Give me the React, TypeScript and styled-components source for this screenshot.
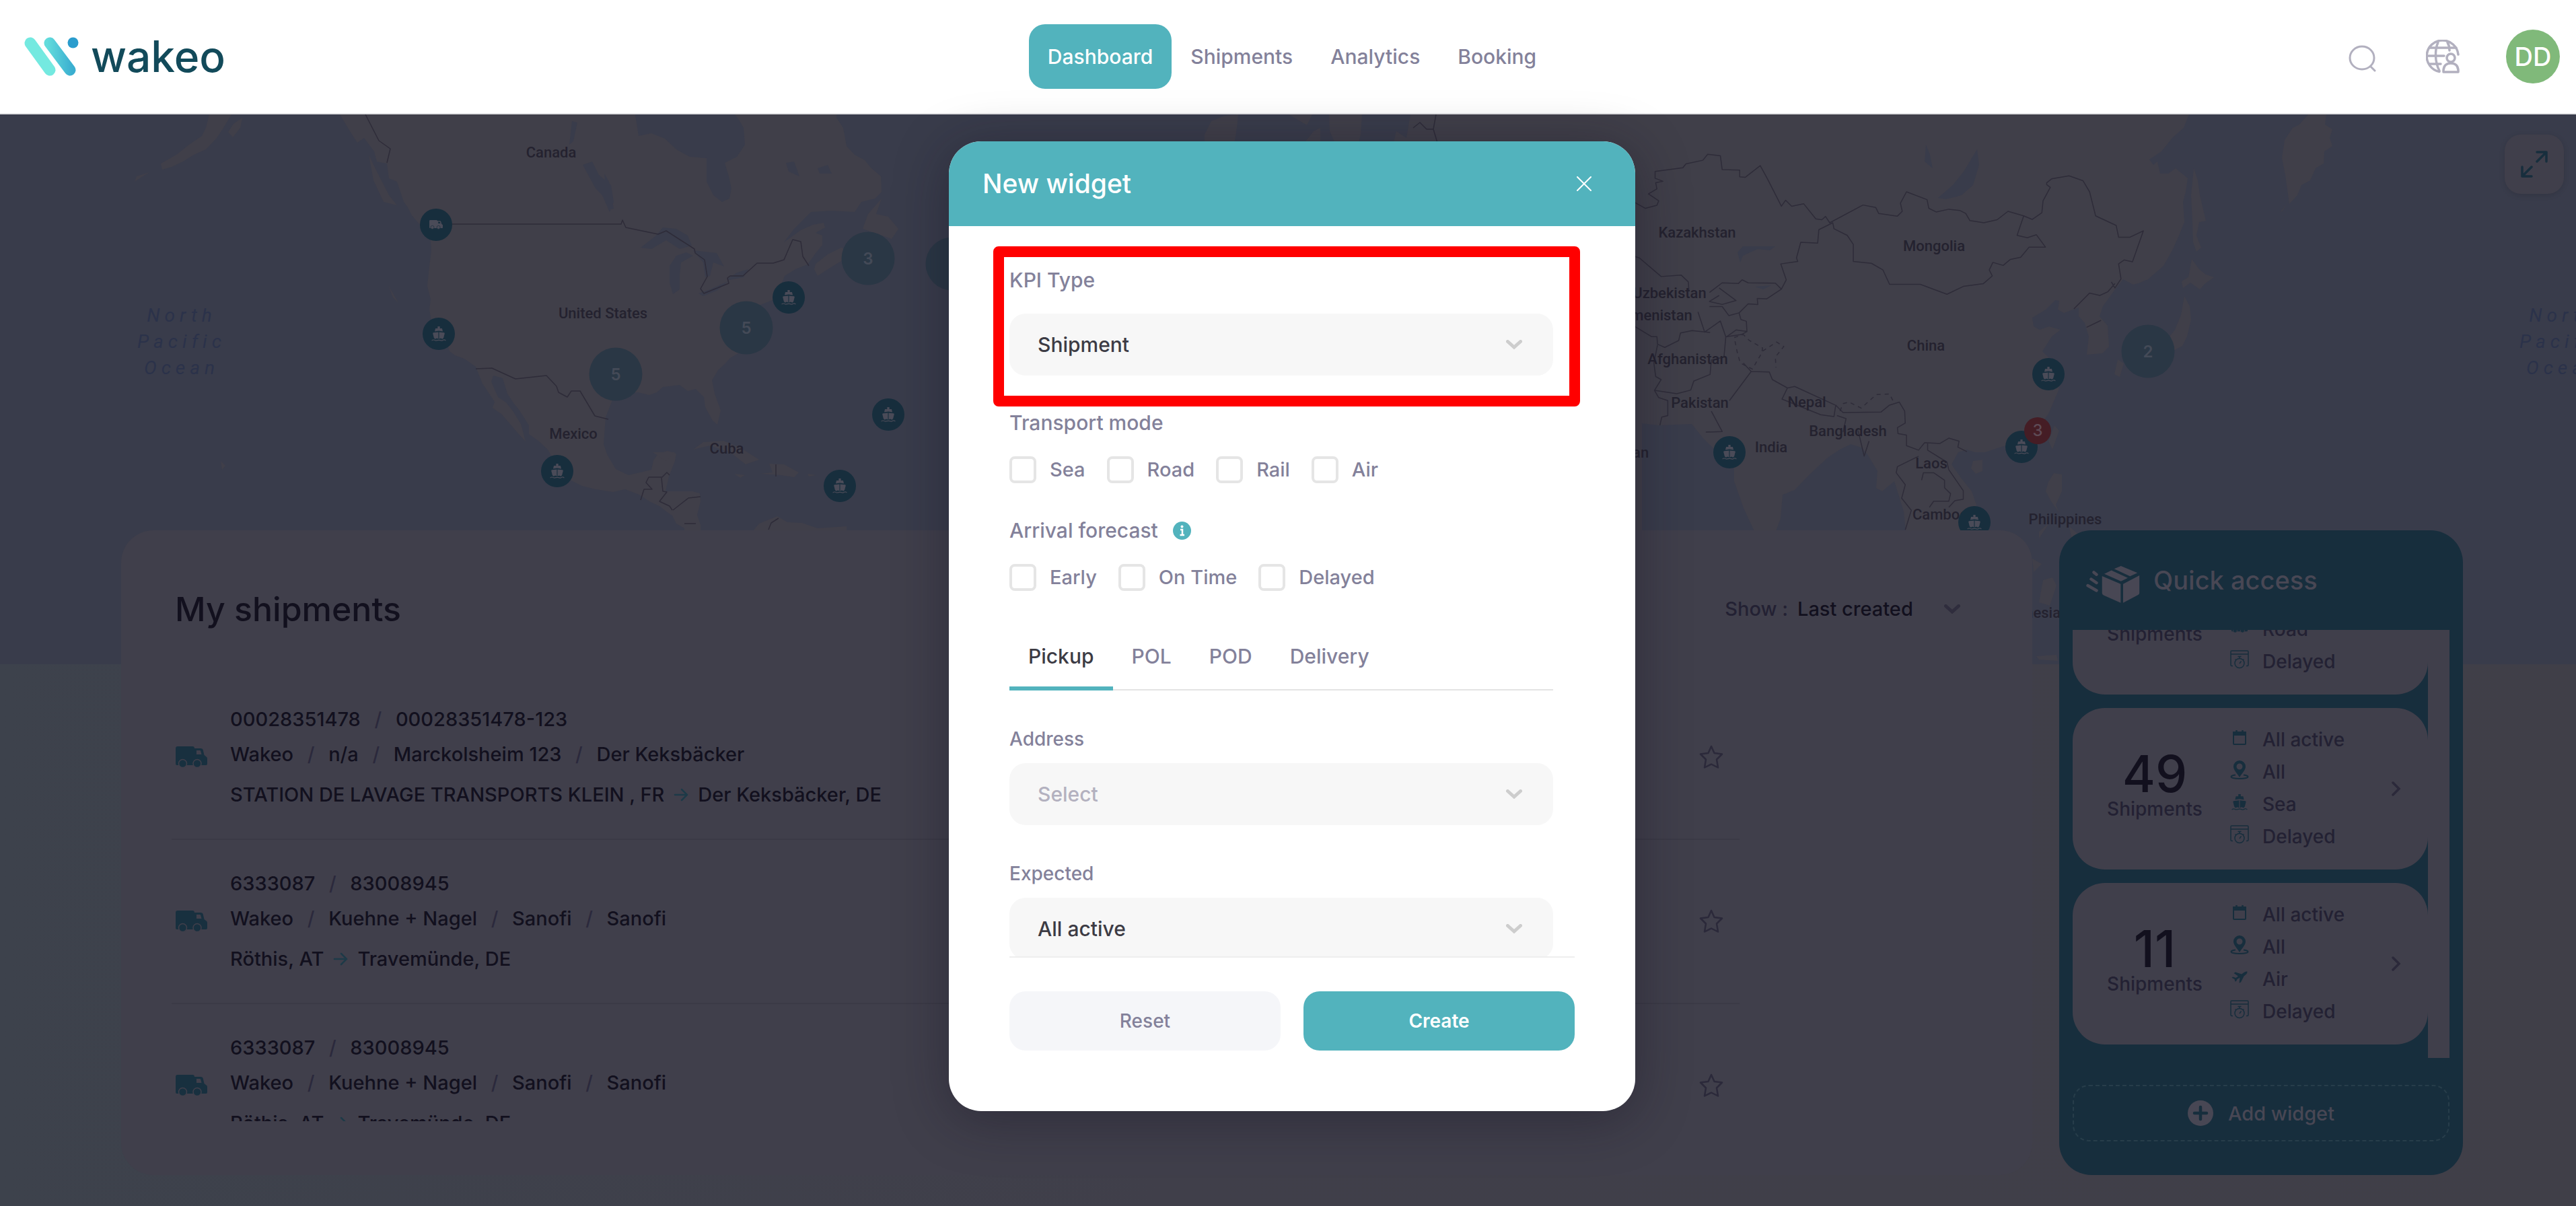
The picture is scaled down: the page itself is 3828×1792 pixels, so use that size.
import React, { useState } from "react";
import styled, { createGlobalStyle, css } from "styled-components";

const teal = "#52b3bd";
const muted = "#83819a";
const ink = "#12101e";
const inkSoft = "#232133";
const deep = "#172e3d";
const surface = "#403f4b";
const ocean = "#393c4b";
const land = "#403f49";

const Global = createGlobalStyle`
  *, *::before, *::after { box-sizing: border-box; }
  html, body { margin: 0; overflow: hidden; background: ${land}; }
  body, button, input, select { font-family: Inter, "Noto Sans", sans-serif; }
  button { border: 0; background: none; padding: 0; cursor: pointer; }
  h1, h2, ul, p, fieldset, legend { margin: 0; padding: 0; border: 0; font-weight: 500; }
  ul { list-style: none; }
  a { text-decoration: none; color: inherit; }
  svg { display: block; flex: none; }
`;

const Page = styled.div`
  display: flex;
  flex-direction: column;
  width: calc(100% + 12px);
  height: 100vh;
`;

/* ---------- Header ---------- */

const Header = styled.header`
  display: grid;
  grid-template-columns: 1fr auto 1fr;
  align-items: center;
  flex: none;
  height: 170px;
  padding: 0 36px;
  background: #fff;
  border-bottom: 2px solid #e4e4e6;
`;

const Logo = styled.a`
  display: flex;
  align-items: center;
  gap: 18px;
  color: #124a5a;
  font-size: 64px;
  font-weight: 500;
  line-height: 72px;
`;

const Nav = styled.nav`
  display: flex;
`;

const NavLink = styled.a<{ $active?: boolean }>`
  padding: 0 28px;
  border-radius: 24px;
  font-size: 30px;
  font-weight: 500;
  line-height: 96px;
  color: ${(p) => (p.$active ? "#fff" : muted)};
  background: ${(p) => (p.$active ? teal : "none")};
`;

const HeaderTools = styled.div`
  display: flex;
  justify-content: flex-end;
  align-items: center;
`;

const ToolButton = styled.button`
  display: flex;
  justify-content: center;
  width: 50px;
  margin-right: 69px;
  color: #b2b0bf;
`;

const Avatar = styled.button`
  width: 80px;
  height: 80px;
  border-radius: 50%;
  background: #80b97a;
  color: #fff;
  font-size: 38px;
  font-weight: 500;
`;

/* ---------- Map ---------- */

const Main = styled.main`
  position: relative;
  display: flex;
  flex: 1;
  min-height: 0;
  padding: 618px 180px 46px;
  background: linear-gradient(90deg, #3d424c, #403f4a 45%, #403f48);
`;

const MapLayer = styled.div`
  position: absolute;
  inset: 0 0 auto;
  height: 817px;
  overflow: hidden;
  background: ${ocean};
`;

type Spot = { $x: number; $y: number };

const spot = css<Spot>`
  position: absolute;
  left: ${(p) => p.$x}px;
  top: ${(p) => p.$y - 170}px;
  transform: translate(-50%, -50%);
`;

const MapLabel = styled.span<Spot>`
  ${spot}
  color: #24222f;
  font-family: Roboto, sans-serif;
  font-size: 22px;
  font-weight: 500;
  line-height: 28px;
  white-space: nowrap;
`;

const OceanLabel = styled.p<Spot>`
  ${spot}
  color: #2b324a;
  font-family: Roboto, sans-serif;
  font-size: 28px;
  font-style: italic;
  font-weight: 400;
  letter-spacing: 7px;
  line-height: 39px;
  text-align: center;
`;

const Pin = styled.button<Spot>`
  ${spot}
  display: flex;
  align-items: center;
  justify-content: center;
  width: 48px;
  height: 48px;
  border-radius: 50%;
  background: ${deep};
  color: #4a4b58;
`;

const Cluster = styled.button<Spot>`
  ${spot}
  width: 79px;
  height: 79px;
  border-radius: 50%;
  background: #2a3745;
  color: #444a57;
  font-size: 24px;
  font-weight: 600;
`;

const AlertBadge = styled.span<Spot>`
  ${spot}
  width: 40px;
  height: 40px;
  border-radius: 50%;
  background: #451d25;
  color: #5e4a55;
  font-size: 24px;
  font-weight: 500;
  line-height: 40px;
  text-align: center;
`;

const ExpandButton = styled.button`
  position: absolute;
  top: 30px;
  right: 30px;
  display: flex;
  align-items: center;
  justify-content: center;
  width: 88px;
  height: 88px;
  border-radius: 24px;
  background: ${surface};
  color: ${deep};
  box-shadow: 0 2px 8px rgba(0, 0, 0, 0.12);
`;

/* ---------- Dashboard ---------- */

const Board = styled.div`
  position: relative;
  display: grid;
  grid-template-columns: minmax(0, 1fr) 600px;
  gap: 40px;
  flex: 1;
  min-height: 0;
`;

const ShipmentsCard = styled.section`
  display: flex;
  flex-direction: column;
  min-height: 0;
  padding: 87px 0 80px;
  border-radius: 48px;
  background: ${surface};
`;

const CardHead = styled.div`
  display: flex;
  align-items: center;
  justify-content: space-between;
  height: 60px;
  margin-bottom: 69px;
  padding: 0 107px 0 80px;
`;

const CardTitle = styled.h1`
  color: ${ink};
  font-size: 50px;
  font-weight: 500;
  line-height: 60px;
`;

const SortLabel = styled.label`
  display: flex;
  align-items: center;
  gap: 14px;
  color: ${inkSoft};
  font-size: 29px;
  font-weight: 500;
  line-height: 36px;
`;

const SortSelect = styled.select`
  appearance: none;
  margin-right: 32px;
  padding: 0;
  border: 0;
  background: none;
  color: ${ink};
  font-size: 29px;
  font-weight: 500;
  line-height: 36px;
`;

const ShipmentList = styled.ul`
  flex: 1;
  min-height: 0;
  overflow: hidden;
  margin: 0 435px 0 75px;
`;

const ShipmentRow = styled.li`
  display: flex;
  align-items: center;
  height: 244px;
  padding: 0 24px 0 6px;
  border-bottom: 2px solid #3b3a46;
`;

const ShipmentText = styled.div`
  flex: 1;
  margin-left: 34px;
  color: ${ink};
  font-size: 29px;
  line-height: 36px;
`;

const Refs = styled.p<{ $gap: number }>`
  display: flex;
  margin-bottom: ${(p) => p.$gap}px;
`;

const Slash = styled.span`
  width: 52px;
  text-align: center;
  color: #2b293c;
`;

const Route = styled.p`
  display: flex;
  align-items: center;
  gap: 14px;
`;

const IconButton = styled.button<{ $color: string }>`
  color: ${(p) => p.$color};
`;

/* ---------- Quick access ---------- */

const QuickPanel = styled.aside`
  display: flex;
  flex-direction: column;
  min-height: 0;
  padding: 0 20px 50px;
  border-radius: 48px;
  background: ${deep};
`;

const QuickHead = styled.div`
  display: flex;
  align-items: center;
  gap: 20px;
  flex: none;
  height: 148px;
  padding: 0 20px;
  color: #484754;
`;

const QuickTitle = styled.h2`
  font-size: 38px;
  font-weight: 500;
  line-height: 48px;
`;

const QuickScroll = styled.div`
  display: grid;
  grid-template-columns: 1fr 32px;
  flex: 1;
  min-height: 0;
`;

const QuickList = styled.ul`
  display: flex;
  flex-direction: column;
  justify-content: flex-end;
  gap: 20px;
  overflow: hidden;
  padding-bottom: 20px;
`;

const ScrollTrack = styled.div`
  background: ${surface};
`;

const Widget = styled.li`
  display: flex;
  align-items: center;
  flex: none;
  height: 240px;
  padding: 0 40px 0 50px;
  border-radius: 48px;
  background: ${surface};
  color: ${inkSoft};
  font-size: 28px;
`;

const WidgetCount = styled.div`
  width: 144px;
  margin-right: 40px;
  padding-bottom: 12px;
  text-align: center;
  line-height: 32px;
`;

const WidgetNumber = styled.div`
  color: ${ink};
  font-size: 75px;
  line-height: 72px;
`;

const WidgetFacts = styled.ul`
  flex: 1;
`;

const WidgetFact = styled.li`
  display: flex;
  gap: 20px;
  height: 48px;
  line-height: 46px;
`;

const FactIcon = styled.span`
  display: flex;
  align-items: center;
  justify-content: center;
  width: 28px;
  height: 40px;
  color: ${deep};
`;

const AddWidget = styled.button`
  display: flex;
  align-items: center;
  justify-content: center;
  gap: 22px;
  flex: none;
  height: 84px;
  margin-top: 40px;
  border: 2px dashed #273d4a;
  border-radius: 24px;
  color: #484754;
  font-size: 29px;
  font-weight: 500;
`;

/* ---------- Dialog ---------- */

const DialogLayer = styled.div`
  position: absolute;
  inset: 0;
  display: flex;
  justify-content: center;
  padding: 40px 0 141px;
`;

const Dialog = styled.form`
  display: flex;
  flex-direction: column;
  width: 1020px;
  overflow: hidden;
  border-radius: 48px;
  background: #fff;
  box-shadow: 0 12px 80px rgba(20, 18, 32, 0.4);
`;

const DialogHead = styled.div`
  display: flex;
  align-items: center;
  justify-content: space-between;
  flex: none;
  height: 126px;
  padding: 0 65px 0 50px;
  background: ${teal};
  color: #fff;
`;

const DialogTitle = styled.h2`
  font-size: 39px;
  line-height: 48px;
`;

const DialogBody = styled.div`
  flex: 1;
  min-height: 0;
  overflow: hidden;
  padding: 62px 122px 0 90px;
`;

const Field = styled.div<{ $small?: boolean }>`
  position: relative;
  display: flex;
  flex-direction: column;
  gap: ${(p) => (p.$small ? 20 : 32)}px;
  margin-bottom: ${(p) => (p.$small ? 56 : 52)}px;
`;

const labelText = css<{ $small?: boolean }>`
  display: flex;
  align-items: center;
  color: ${muted};
  font-size: ${(p) => (p.$small ? 28 : 30)}px;
  font-weight: 500;
  line-height: ${(p) => (p.$small ? 32 : 36)}px;
`;

const FieldLabel = styled.label<{ $small?: boolean }>`
  ${labelText}
`;

const Group = styled.fieldset`
  min-width: 0;
  margin-bottom: 52px;
`;

const GroupLabel = styled.legend`
  ${labelText}
  gap: 22px;
  margin-bottom: 32px;
`;

const CheckRow = styled.div`
  display: flex;
  gap: 32px;
`;

const Check = styled.label`
  ${labelText}
  gap: 20px;
  height: 40px;
  font-size: 29px;
`;

const Box = styled.input`
  appearance: none;
  width: 40px;
  height: 40px;
  margin: 0;
  border: 4px solid #e5e5e5;
  border-radius: 8px;
  &:checked { background: ${teal}; }
`;

const Control = styled.div`
  display: grid;
  align-items: center;
  color: #cdcdcd;
  > * { grid-area: 1 / 1; }
  > svg { justify-self: end; margin-right: 46px; pointer-events: none; }
`;

const Select = styled.select<{ $empty?: boolean }>`
  appearance: none;
  width: 100%;
  height: 92px;
  padding: 0 42px;
  border: 0;
  border-radius: 24px;
  background: #f7f7f7;
  color: ${(p) => (p.$empty ? "#b3b1bf" : "#3c3b44")};
  font-size: 30px;
  font-weight: 500;
`;

const Highlight = styled.div`
  position: absolute;
  inset: -32px -40px -46px -24px;
  border: 16px solid #f00;
  border-radius: 8px;
  pointer-events: none;
`;

const Tabs = styled.div`
  display: flex;
  height: 96px;
  margin: 52px 0 56px;
  box-shadow: inset 0 -2px #e3e3e3;
`;

const Tab = styled.button<{ $active: boolean }>`
  padding: 0 28px;
  border-bottom: 6px solid ${(p) => (p.$active ? teal : "transparent")};
  color: ${(p) => (p.$active ? "#3c3b44" : muted)};
  font-size: 30px;
  font-weight: 500;
`;

const DialogFoot = styled.div`
  display: grid;
  grid-template-columns: 1fr 1fr;
  gap: 34px;
  flex: none;
  margin: 0 90px;
  padding: 50px 0 90px;
  border-top: 2px solid #eee;
`;

const Action = styled.button<{ $primary?: boolean }>`
  height: 88px;
  border-radius: 24px;
  background: ${(p) => (p.$primary ? teal : "#f5f6f9")};
  color: ${(p) => (p.$primary ? "#fff" : muted)};
  font-size: 28px;
  font-weight: ${(p) => (p.$primary ? 600 : 500)};
`;

/* ---------- Icons ---------- */

const LogoMark = () => (
  <svg width="81" height="58" viewBox="0 0 81 58" fill="none" strokeLinecap="round" strokeWidth="17">
    <defs>
      <linearGradient id="bar" gradientUnits="userSpaceOnUse" x1="34" y1="30" x2="72" y2="30">
        <stop offset="0" stopColor="#62dcdc" />
        <stop offset="1" stopColor="#3aaed0" />
      </linearGradient>
    </defs>
    <path d="M9 9 38 49" stroke="#74e9e0" />
    <path d="M38 9 68 49" stroke="url(#bar)" />
    <circle cx="72.500" cy="8.500" r="8" fill="#2a9ccd" />
  </svg>
);

const SearchIcon = () => (
  <svg width="42" height="46" viewBox="0 -4 42 46" fill="none" stroke="currentColor" strokeWidth="3" strokeLinecap="round">
    <ellipse cx="20" cy="21" rx="18" ry="17" />
    <path d="M33 34 39 40" />
  </svg>
);

const GlobeUserIcon = () => (
  <svg width="50" height="50" viewBox="0 0 50 50" fill="none" stroke="currentColor" strokeWidth="3.5" strokeLinecap="round" strokeLinejoin="round">
    <path d="M48 22A23.500 23.500 0 1 0 20 47.500" />
    <path d="M18 4C13 15 13 33 20 46M32 4Q35 9 35 16M5 12H45M2 24H27M5 36H22" />
    <circle cx="37" cy="27" r="6" />
    <path d="M26 48V45Q27 35 37 35T48 45V48Z" />
  </svg>
);

const ExpandIcon = () => (
  <svg width="42" height="42" viewBox="0 0 42 42" fill="none" stroke="currentColor" strokeWidth="3.500" strokeLinecap="round" strokeLinejoin="round">
    <path d="M25 17 39 3M25 3H39V17M17 25 3 39M3 25V39H17" />
  </svg>
);

const ShipIcon = ({ size = 22 }: { size?: number }) => (
  <svg width={size} height={size} viewBox="0 0 20 20" fill="currentColor">
    <path d="M8.500 0h3v2.800h3l1 4-5.500-.8-5.500.8 1-4h3z" />
    <path d="M9.500 7.800v9.200L7.500 16 5 17 3.500 15.500 2 9.500q0-.8.8-1zM10.500 7.800v9.200L12.500 16 15 17l1.500-1.500L18 9.500q0-.8-.8-1z" />
    <path d="M.5 19.200Q2.500 17.600 4 18.500T7 19 10 18.500 13 19 16 18.500 19.500 19.200" fill="none" stroke="currentColor" strokeWidth="1.100" />
  </svg>
);

const TruckIcon = ({ size = 47, hole = surface }: { size?: number; hole?: string }) => (
  <svg width={size} height={(size * 32) / 47} viewBox="0 0 47 32" fill="currentColor">
    <path d="M3 0H25q3 0 3 3H37q3 0 3.600 2L42.500 13 45 15q2 1 2 3v8q0 2-2 2H2Q0 28 0 26V3Q0 0 3 0Z" />
    <path d="M31 6h5q1 0 1.200 1l1.300 5H31z" fill={hole} />
    <g stroke={hole} strokeWidth="1.500">
      <circle cx="10.500" cy="25.500" r="6" />
      <circle cx="32" cy="25.500" r="6" />
    </g>
  </svg>
);

const StarIcon = () => (
  <svg width="36" height="36" viewBox="0 0 36 36" fill="none" stroke="currentColor" strokeWidth="2.500" strokeLinejoin="round">
    <path d="M18 2 22.500 12 34 13.500 26 21.500 28 33.500 18 28.500 8 33.500 10 21.500 2 13.500 13.500 12Z" />
  </svg>
);

const ArrowIcon = () => (
  <svg width="22" height="20" viewBox="0 0 22 20" fill="none" stroke="#1d3a48" strokeWidth="2.500" strokeLinecap="round">
    <path d="M2 10H20M12 2 20 10 12 18" />
  </svg>
);

const Chevron = () => (
  <svg width="24" height="14" viewBox="0 0 24 14" fill="none" stroke="currentColor" strokeWidth="5" strokeLinecap="round">
    <path d="M2.500 2.500 12 11 21.500 2.500" />
  </svg>
);

const NextIcon = () => (
  <svg width="14" height="22" viewBox="0 0 14 22" fill="none" stroke="currentColor" strokeWidth="3.500" strokeLinecap="round">
    <path d="M2 2 11 11 2 20" />
  </svg>
);

const PackageIcon = () => (
  <svg width="80" height="68" viewBox="0 -13 80 68" fill="currentColor">
    <path d="M41.600 4.300 51.800 0 76.300 10.300 65.300 15.300ZM27 11.700 37.600 6.500 62 17.700 51.800 22.700ZM23.700 15 51.400 26.700V54.700L26 43.500q-2.300-1-2.300-3.500ZM55 26.700 79.200 14V40q0 2-2 3L55 54.700Z" />
    <path d="M11.500 9.500 15.500 12.700M7.500 19.500 15.500 25M2.500 29 15.500 36.500" stroke="currentColor" strokeWidth="4.500" strokeLinecap="round" />
  </svg>
);

const CalendarIcon = () => (
  <svg width="20" height="22" viewBox="0 0 20 22" fill="none" stroke="currentColor" strokeWidth="2">
    <rect x="1" y="3" width="18" height="18" rx="1" />
    <path d="M1 3H19V7H1Z" fill="currentColor" />
    <path d="M5.500 0V4M14.500 0V4" strokeWidth="2.500" />
  </svg>
);

const PlaceIcon = () => (
  <svg width="28" height="28" viewBox="0 0 28 28" fill="currentColor">
    <path fillRule="evenodd" d="M14 0a9 9 0 0 1 9 9c0 5-6 11-9 16C11 20 5 14 5 9a9 9 0 0 1 9-9Zm0 4.500a4.500 4.500 0 1 0 0 9 4.500 4.500 0 0 0 0-9Z" />
    <path d="M8 21.500C3 22 1.500 23.500 1.500 24.200 1.500 25.800 7 27 14 27s12.500-1.200 12.500-2.800c0-.7-1.500-2.200-6.500-2.700" fill="none" stroke="currentColor" strokeWidth="2" />
  </svg>
);

const DelayedIcon = () => (
  <svg width="28" height="28" viewBox="0 0 28 28" fill="none" stroke="currentColor" strokeWidth="1.500">
    <path d="M4 23.500H2.500Q1 23.500 1 22V2.500Q1 1 2.500 1H25.500Q27 1 27 2.500V22q0 1.500-1.500 1.500H24M1 6H27" />
    <circle cx="14" cy="19.500" r="7" />
    <path d="M14 12.500V9.500M11.500 9.500H16.500M14 20 16.500 16.500M7.500 13.500 9 15M20.500 13.500 19 15" />
  </svg>
);

const PlaneIcon = () => (
  <svg width="24" height="18" viewBox="0 0 24 18" fill="currentColor">
    <path d="M23.500.5Q21 0 18.500 2L15 4.500 6 1.500 3.500 3 10 7.500 6.500 10 2 8.500.5 9.800 4.500 12 5.500 15.500 7 15 8.500 12 12.500 9.500 11.500 17.500 14 16.500 18.500 7.500 21.500 5Q24 3 23.500.5Z" />
  </svg>
);

const PlusIcon = () => (
  <svg width="38" height="38" viewBox="0 0 38 38">
    <circle cx="19" cy="19" r="19" fill="currentColor" />
    <path d="M19 10V28M10 19H28" stroke={deep} strokeWidth="4.500" strokeLinecap="round" />
  </svg>
);

const InfoIcon = () => (
  <svg width="27" height="27" viewBox="0 0 27 27">
    <circle cx="13.500" cy="13.500" r="13.500" fill={teal} />
    <circle cx="13.500" cy="7.500" r="2" fill="#fff" />
    <path d="M11 12H14V20M10.500 20H17" fill="none" stroke="#fff" strokeWidth="2.500" />
  </svg>
);

const CloseIcon = () => (
  <svg width="22" height="22" viewBox="0 0 22 22" stroke="currentColor" strokeWidth="2" strokeLinecap="round">
    <path d="M1 1 21 21M21 1 1 21" />
  </svg>
);

/* ---------- World map ---------- */

const WorldMap = () => (
  <svg width="3840" height="817" viewBox="0 170 3840 817" fill={land} role="img" aria-label="World map">
    {/* North America */}
    <path d="M505 170 520 195 531 212 541 205 556 225 560 240 575 243 578 265 590 270 600 300 606 308 612 320 625 335 640 358 641 372 637 405 635 425 640 445 638 460 642 480 661 500 668 522 676 528 690 533 707 545 717 570 735 597 732 606 745 615 758 630 770 644 781 656 774 630 763 612 752 598 740 590 730 567 733 558 747 562 754 585 764 600 772 610 786 632 786 645 800 655 814 668 822 682 826 698 845 712 865 722 885 727 911 731 929 727 950 735 965 745 980 752 990 760 999 766 1005 778 1017 785 1017 800 1041 800 1041 780 1036 765 1041 745 1040 733 1029 730 989 730 994 708 1003 685 1005 674 992 670 978 674 971 684 968 698 934 706 915 697 902 675 897 660 900 620 911 592 928 585 948 583 965 587 976 583 985 575 1010 572 1022 581 1034 578 1046 590 1048 605 1059 625 1066 631 1071 610 1062 585 1058 565 1067 550 1078 540 1085 532 1097 525 1112 500 1125 455 1150 445 1160 425 1166 410 1182 400 1200 393 1213 375 1222 364 1222 350 1212 346 1226 338 1224 331 1208 334 1190 342 1165 360 1180 340 1205 315 1235 313 1270 315 1280 300 1300 295 1310 285 1309 262 1295 250 1285 238 1270 230 1258 217 1253 190 1243 175 1243 165Z" />
    <path d="M344 170 332 190 322 205 306 222 288 230 272 240 255 248 241 252 239 243 262 230 281 215 300 202 306 190 311 170ZM360 175 357 190 346 204 339 196 347 184ZM222 256 212 262 200 270 203 262ZM1310 295 1302 318 1320 322 1335 340 1325 355 1305 348 1282 340 1290 318ZM1210 400 1215 410 1230 400 1250 388 1262 372 1250 368 1230 378 1212 392ZM548 230 560 255 578 290 590 305 570 300 555 268ZM577 424 592 450 584 442Z" />
    <path d="M1030 668 1045 657 1075 655 1100 665 1128 683 1108 690 1085 672 1055 662ZM1143 689 1165 690 1187 702 1180 709 1160 706 1130 704 1148 702ZM1091 704 1107 706 1100 710ZM1200 704 1212 706 1202 708ZM1118 790 1128 778 1155 767 1170 776 1192 777 1215 785 1258 782 1258 800 1118 800ZM328 685 335 692 330 698ZM970 672 1003 672 990 685Z" />
    {/* Hudson Bay and the Great Lakes */}
    <path
      fill={ocean}
      d="M943 165 949 202 968 198 988 206 1005 222 1025 233 1050 235 1050 270 1060 290 1073 300 1084 295 1087 280 1083 262 1077 242 1095 233 1107 215 1105 190 1098 178 1088 165ZM952 368 975 350 985 338 1005 340 1022 350 1028 365 1010 370 990 357 968 370ZM995 395 1005 380 1020 375 1030 380 1012 390 1010 410 1010 430 1000 437 995 420ZM1030 372 1065 376 1076 396 1060 390 1055 410 1048 412 1045 390ZM1038 436 1055 430 1082 418 1065 432 1045 440ZM1080 415 1095 405 1112 400 1105 412 1085 416ZM866 245 880 240 890 260 908 275 912 300 906 315 895 290 885 280ZM850 180 858 182 852 210 846 215ZM898 258 905 270 912 310 904 312ZM1168 242 1180 240 1188 262 1172 255ZM1215 250 1230 245 1236 258 1218 258Z"
    />
    {/* Europe, under the dialog */}
    <path d="M1790 200 1800 180 1820 172 1840 170 1838 190 1834 215 1790 215ZM1915 170 1950 170 1942 186ZM1940 210 1952 195 1962 190 1962 215ZM1975 170 2024 170 2022 200 2018 215 1985 215 1976 195ZM2070 215 2075 195 2090 205 2096 170 2440 170 2440 790 2060 790 2060 215Z" />
    {/* Asia */}
    <path d="M2430 165 3255 165 3245 190 3228 205 3212 225 3194 237 3200 245 3206 240 3210 258 3222 258 3233 250 3251 265 3248 285 3244 300 3246 330 3238 350 3228 372 3215 395 3192 415 3180 420 3170 423 3155 415 3143 430 3125 455 3120 470 3132 484 3134 515 3124 525 3101 527 3104 500 3098 480 3089 470 3089 457 3067 465 3058 460 3060 447 3054 446 3040 460 3020 472 3022 485 3031 490 3045 485 3062 490 3049 500 3035 522 3053 540 3062 548 3059 580 3044 615 3030 635 3017 645 2995 658 2977 663 2950 672 2935 672 2923 668 2910 672 2900 690 2914 710 2930 730 2937 750 2930 775 2909 800 2833 800 2829 760 2815 715 2797 730 2788 725 2790 700 2775 675 2766 665 2750 660 2734 668 2716 680 2689 705 2667 728 2649 735 2646 770 2635 800 2612 800 2591 755 2577 715 2577 690 2560 680 2530 650 2514 630 2465 632 2430 628Z" />
    <path d="M3430 170 3457 170 3455 185 3466 192 3462 205 3466 217 3454 225 3453 243 3441 250 3433 268 3420 275 3414 290 3402 303 3396 260 3391 235 3395 208 3407 190 3417 185ZM3260 250 3266 268 3269 290 3278 328 3268 330 3264 350 3271 368 3264 374 3259 360 3258 330 3256 290ZM3257 385 3268 400 3278 408 3290 412 3276 422 3269 430 3255 420 3244 428 3242 418 3252 412ZM3246 440 3254 455 3256 475 3250 500 3243 514 3228 522 3215 526 3220 505 3232 490 3241 468ZM3147 534 3156 540 3150 560 3142 556ZM3053 632 3060 640 3050 668 3044 655ZM2932 685 2946 683 2946 700 2936 704 2929 696ZM3052 703 3064 705 3064 730 3055 750 3060 762 3048 745 3040 730 3044 716ZM3030 790 3046 776 3030 800ZM3075 782 3095 800 3080 808ZM3398 303 3392 313 3388 316Z" />
    <path d="M3020 830 3034 838 3022 850ZM3036 862 3050 858 3056 870 3046 900 3030 895ZM3026 975 3056 973 3058 982 3030 980Z" />
    <path fill={ocean} d="M2938 222 2941 245 2932 275 2915 290 2892 296 2880 294 2902 275 2918 255ZM2862 215 2868 230 2872 250 2860 240ZM2582 375 2590 366 2606 366 2638 366 2630 372 2612 370 2590 380 2586 390ZM2608 426 2632 424 2620 430Z" />
    {/* Borders */}
    <g fill="none" stroke="#2e2c39" strokeWidth="1.500" strokeLinejoin="round">
      <path d="M543 170 563 209 580 221 575 242M672 333H923L925 327 930 338 978 348 990 343 1032 370 1033 376 1047 386 1051 411 1041 429 1046 436 1083 421 1081 413 1085 410H1104L1125 391H1149L1165 386 1178 356 1190 359 1193 381 1202 395" />
      <path d="M707 548 731 547 766 563 812 558 827 574 830 583 843 590 849 581H862L884 618 904 623M952 743 957 727H969L960 717 964 709H984L991 702 995 706M983 710 985 730 991 731 980 745 995 752 999 758M1000 758 1023 740 1041 738M1017 778H1034M1153 690V708M1142 787 1146 777 1157 770M2100 190 2110 182 2120 192H2130L2134 170M2130 192 2136 212" />
      <g transform="translate(2420 160) scale(0.898 0.4464)">
        <path vectorEffect="non-scaling-stroke" d="M10 315 28 335 47 325 50 310 33 287 47 270 45 250 57 245 44 235V212L90 200 95 187 123 175 131 155 152 160 155 206 184 208V230L193 232 218 193 230 237 253 328 260 308 270 328 290 320 310 370 320 373 326 362 333 383 388 324 409 332 414 352 445 361 453 345 450 318 460 280 494 306 497 335 509 347 530 338 548 342 558 352 565 376 588 383 610 373 628 345 654 360 668 372 684 350 686 310 698 265 692 256V250L700 237 729 227 752 243 763 280 773 360 807 392 811 431H830L852 410 834 513 820 507 811 520 815 570 805 600 799 580M805 585 793 613 780 625 763 617 737 670" />
        <path vectorEffect="non-scaling-stroke" d="M654 360 643 425 660 433 675 423 690 464H663L649 498 632 505 620 525 603 515 597 540 602 560 587 586 554 595 527 621 483 588H432L421 540 402 518 372 512V455L362 425 340 403 338 383 315 406 313 451 285 448 278 500 280 512 252 520 261 573 253 604 229 636 213 635 214 655 198 653 183 683 186 705 195 711 196 745 178 740 162 763" />
        <path vectorEffect="non-scaling-stroke" d="M10 495 18 500 54 562 87 557 99 580 100 610M253 604 243 584 198 583 188 573 182 585 155 583 134 615M150 600 178 642 155 655 134 645 150 625M134 662H155L166 692 183 683M115 680 126 747 152 710 161 763 187 755 196 745M10 728 38 762 47 762 48 787 60 798 83 775 86 750 105 742 135 748M161 763 158 830 137 840 135 888 108 910 103 940 80 952 43 941 54 905 45 895 42 850 48 790M43 941 50 965 65 975V1025L55 1030 52 1057M167 975 203 878 190 850M137 1010 155 1078 128 1080M203 878 233 880 238 905 263 933 254 970 318 1022 340 1028 343 990 355 1015 418 1013 432 990 448 980 457 1010 458 1050 445 1065 446 1085 460 1090V1125L480 1140 490 1115 515 1118 530 1100 547 1110 545 1130 560 1145M263 933 275 928 342 990M345 1025 360 1035 355 1080M380 1075 390 1160 398 1110M480 1160 445 1195 443 1215 458 1255 452 1300 468 1340 458 1405M495 1118V1140L527 1180 530 1205 554 1275V1303L540 1308 530 1330M485 1240 488 1215 505 1215 523 1240V1265L533 1285 530 1310H505L498 1330M758 731 782 708" />
        <path vectorEffect="non-scaling-stroke" strokeDasharray="6 6" d="M175 765 190 755 200 775 222 800 220 818 205 870 185 850 180 815ZM222 810 245 780 257 795 243 830 244 865M350 1010 355 985 365 980 385 1000 410 955 432 953 440 985" />
      </g>
    </g>
  </svg>
);

const countries: [string, number, number][] = [
  ["Canada", 819, 227],
  ["United States", 896, 466],
  ["Mexico", 852, 645],
  ["Cuba", 1080, 667],
  ["Kazakhstan", 2522, 346],
  ["Mongolia", 2874, 366],
  ["Uzbekistan", 2481, 436],
  ["Turkmenistan", 2447, 469],
  ["Afghanistan", 2508, 534],
  ["Pakistan", 2526, 599],
  ["Nepal", 2685, 598],
  ["Bangladesh", 2746, 641],
  ["India", 2632, 665],
  ["China", 2862, 514],
  ["Laos", 2870, 689],
  ["Cambodia", 2892, 765],
  ["Philippines", 3069, 772],
  ["Oman", 2421, 673],
  ["Indonesia", 3014, 911],
];

const ships: [number, number][] = [
  [652, 496],
  [828, 700],
  [1172, 442],
  [1320, 616],
  [1248, 722],
  [3044, 556],
  [3004, 664],
  [2570, 672],
  [2934, 776],
];

const clusters: [string, number, number][] = [
  ["5", 1109, 487],
  ["5", 915, 556],
  ["3", 1290, 384],
  ["", 1415, 392],
  ["2", 3192, 522],
];

/* ---------- Data ---------- */

type Shipment = { refs: string[]; parties: string[]; from: string; to: string };

const sanofi: Shipment = {
  refs: ["6333087", "83008945"],
  parties: ["Wakeo", "Kuehne + Nagel", "Sanofi", "Sanofi"],
  from: "Röthis, AT",
  to: "Travemünde, DE",
};

const shipments: Shipment[] = [
  {
    refs: ["00028351478", "00028351478-123"],
    parties: ["Wakeo", "n/a", "Marckolsheim 123", "Der Keksbäcker"],
    from: "STATION DE LAVAGE TRANSPORTS KLEIN , FR",
    to: "Der Keksbäcker, DE",
  },
  sanofi,
  sanofi,
];

const widgets = [
  { count: 26, mode: "Road", icon: <TruckIcon size={24} /> },
  { count: 49, mode: "Sea", icon: <ShipIcon size={24} /> },
  { count: 11, mode: "Air", icon: <PlaneIcon /> },
];

const Slashed = ({ items, gap }: { items: string[]; gap: number }) => (
  <Refs $gap={gap}>
    {items.map((item, i) => (
      <React.Fragment key={i}>
        {i > 0 && <Slash>/</Slash>}
        <span>{item}</span>
      </React.Fragment>
    ))}
  </Refs>
);

const SelectField = ({ id, label, value, small, empty, marked }: { id: string; label: string; value: string; small?: boolean; empty?: boolean; marked?: boolean }) => (
  <Field $small={small}>
    <FieldLabel htmlFor={id} $small={small}>{label}</FieldLabel>
    <Control>
      <Select id={id} $empty={empty}>
        <option>{value}</option>
      </Select>
      <Chevron />
    </Control>
    {marked && <Highlight />}
  </Field>
);

const Checks = ({ items }: { items: string[] }) => (
  <CheckRow>
    {items.map((item) => (
      <Check key={item}>
        <Box type="checkbox" />
        {item}
      </Check>
    ))}
  </CheckRow>
);

export default function App() {
  const [tab, setTab] = useState("Pickup");

  return (
    <>
      <Global />
      <Page>
        <Header>
          <Logo href="#">
            <LogoMark />
            wakeo
          </Logo>
          <Nav>
            <NavLink href="#" $active>Dashboard</NavLink>
            <NavLink href="#">Shipments</NavLink>
            <NavLink href="#">Analytics</NavLink>
            <NavLink href="#">Booking</NavLink>
          </Nav>
          <HeaderTools>
            <ToolButton aria-label="Search"><SearchIcon /></ToolButton>
            <ToolButton aria-label="Language"><GlobeUserIcon /></ToolButton>
            <Avatar>DD</Avatar>
          </HeaderTools>
        </Header>

        <Main>
          <MapLayer>
            <WorldMap />
            <OceanLabel $x={270} $y={507}>North<br />Pacific<br />Ocean</OceanLabel>
            <OceanLabel $x={3810} $y={507}>North<br />Pacific<br />Ocean</OceanLabel>
            {countries.map(([name, x, y]) => (
              <MapLabel key={name} $x={x} $y={y}>{name}</MapLabel>
            ))}
            {clusters.map(([n, x, y]) => (
              <Cluster key={x} $x={x} $y={y} aria-label="Cluster">{n}</Cluster>
            ))}
            <Pin $x={648} $y={334} aria-label="Truck">
              <TruckIcon size={20} hole={deep} />
            </Pin>
            {ships.map(([x, y]) => (
              <Pin key={x} $x={x} $y={y} aria-label="Ship"><ShipIcon /></Pin>
            ))}
            <AlertBadge $x={3028} $y={640}>3</AlertBadge>
            <ExpandButton aria-label="Expand map"><ExpandIcon /></ExpandButton>
          </MapLayer>

          <Board>
            <ShipmentsCard>
              <CardHead>
                <CardTitle>My shipments</CardTitle>
                <SortLabel>
                  Show :
                  <SortSelect>
                    <option>Last created</option>
                  </SortSelect>
                  <IconButton as="span" $color="#2f2d3d"><Chevron /></IconButton>
                </SortLabel>
              </CardHead>
              <ShipmentList>
                {shipments.map((s, i) => (
                  <ShipmentRow key={i}>
                    <IconButton as="span" $color="#18303f"><TruckIcon /></IconButton>
                    <ShipmentText>
                      <Slashed items={s.refs} gap={16} />
                      <Slashed items={s.parties} gap={24} />
                      <Route>
                        {s.from} <ArrowIcon /> {s.to}
                      </Route>
                    </ShipmentText>
                    <IconButton $color="#2b293a" aria-label="Favourite"><StarIcon /></IconButton>
                  </ShipmentRow>
                ))}
              </ShipmentList>
            </ShipmentsCard>

            <QuickPanel>
              <QuickHead>
                <PackageIcon />
                <QuickTitle>Quick access</QuickTitle>
              </QuickHead>
              <QuickScroll>
                <QuickList>
                  {widgets.map((w) => (
                    <Widget key={w.count}>
                      <WidgetCount>
                        <WidgetNumber>{w.count}</WidgetNumber>
                        Shipments
                      </WidgetCount>
                      <WidgetFacts>
                        <WidgetFact><FactIcon><CalendarIcon /></FactIcon>All active</WidgetFact>
                        <WidgetFact><FactIcon><PlaceIcon /></FactIcon>All</WidgetFact>
                        <WidgetFact><FactIcon>{w.icon}</FactIcon>{w.mode}</WidgetFact>
                        <WidgetFact><FactIcon><DelayedIcon /></FactIcon>Delayed</WidgetFact>
                      </WidgetFacts>
                      <IconButton $color="#2b293a" aria-label="Open"><NextIcon /></IconButton>
                    </Widget>
                  ))}
                </QuickList>
                <ScrollTrack />
              </QuickScroll>
              <AddWidget><PlusIcon />Add widget</AddWidget>
            </QuickPanel>
          </Board>

          <DialogLayer>
            <Dialog role="dialog" aria-labelledby="dialog-title" onSubmit={(e) => e.preventDefault()}>
              <DialogHead>
                <DialogTitle id="dialog-title">New widget</DialogTitle>
                <IconButton type="button" $color="#fff" aria-label="Close"><CloseIcon /></IconButton>
              </DialogHead>
              <DialogBody>
                <SelectField id="kpi" label="KPI Type" value="Shipment" marked />
                <Group>
                  <GroupLabel>Transport mode</GroupLabel>
                  <Checks items={["Sea", "Road", "Rail", "Air"]} />
                </Group>
                <Group>
                  <GroupLabel>Arrival forecast <InfoIcon /></GroupLabel>
                  <Checks items={["Early", "On Time", "Delayed"]} />
                </Group>
                <Tabs role="tablist">
                  {["Pickup", "POL", "POD", "Delivery"].map((t) => (
                    <Tab key={t} type="button" role="tab" aria-selected={t === tab} $active={t === tab} onClick={() => setTab(t)}>
                      {t}
                    </Tab>
                  ))}
                </Tabs>
                <SelectField id="address" label="Address" value="Select" small empty />
                <SelectField id="expected" label="Expected" value="All active" small />
              </DialogBody>
              <DialogFoot>
                <Action type="reset">Reset</Action>
                <Action type="submit" $primary>Create</Action>
              </DialogFoot>
            </Dialog>
          </DialogLayer>
        </Main>
      </Page>
    </>
  );
}
